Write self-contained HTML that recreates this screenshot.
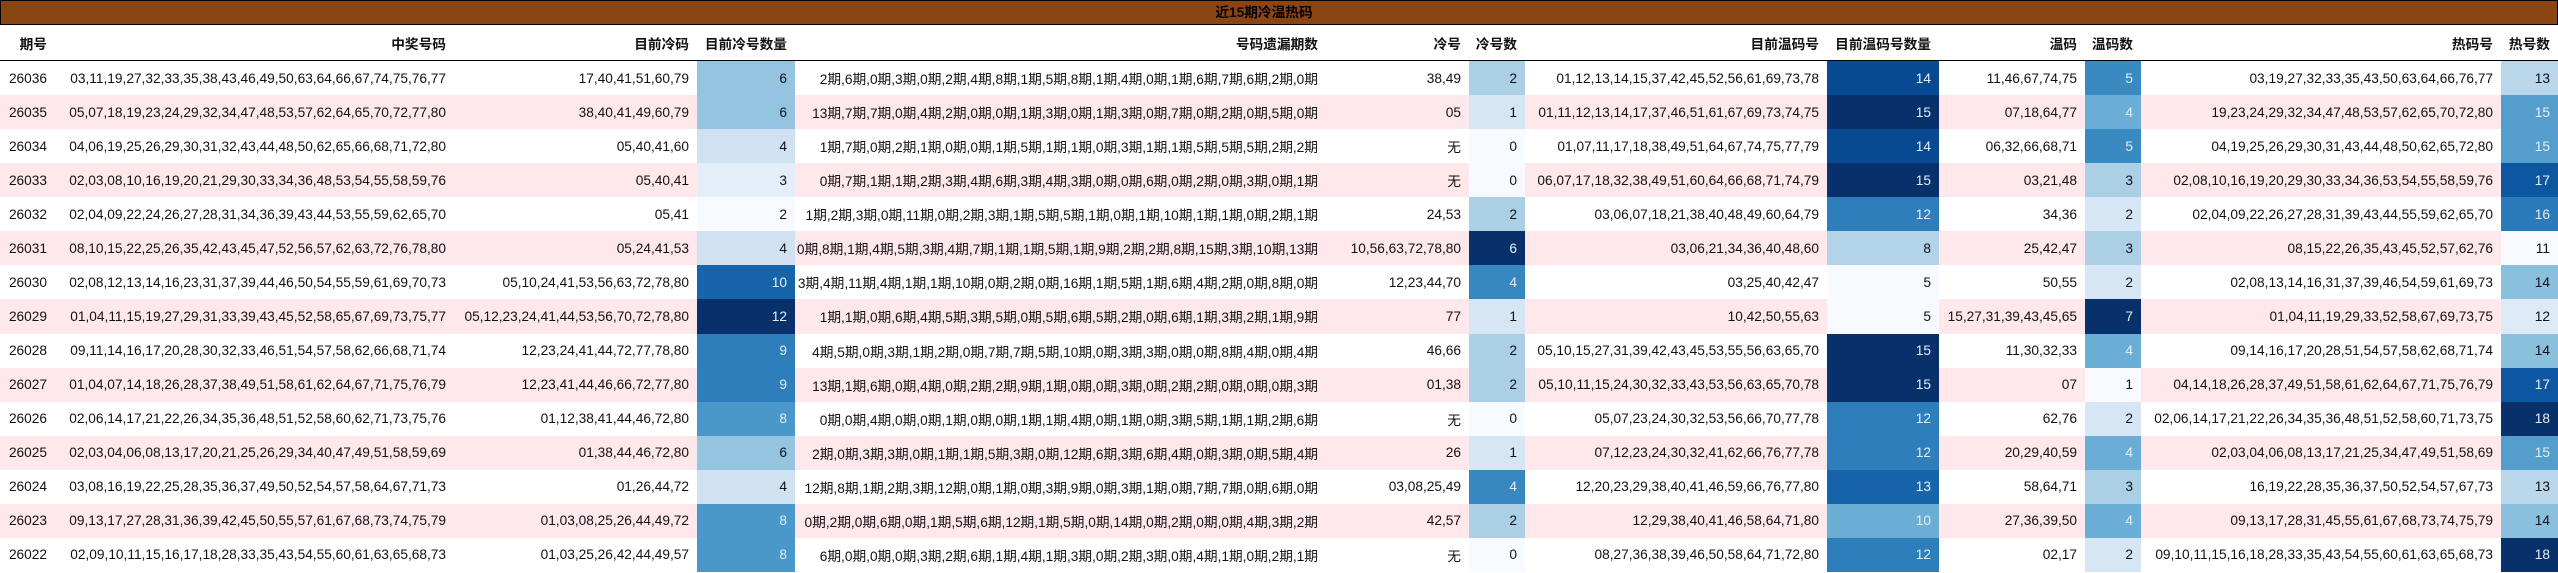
<!DOCTYPE html>
<html><head><meta charset="utf-8">
<style>
*{margin:0;padding:0;box-sizing:border-box}
html,body{width:2558px;height:573px;overflow:hidden;background:#fff}
body{font-family:"Liberation Sans","Noto Sans CJK SC",sans-serif;font-size:13.7px;color:#111}
.title{height:25px;background:#8B4513;border:1px solid #000;border-bottom:1.5px solid #000;text-align:center;font-weight:bold;line-height:23px;padding-right:30px;color:#000}
.r{display:flex;height:34.07px;align-items:stretch}
.h{height:36px;border-bottom:1.5px solid #000;font-weight:bold}
.p{background:#ffe8eb}
.r>div{white-space:nowrap;text-align:right;padding-right:8px;display:flex;align-items:center;justify-content:flex-end;overflow:visible}
.c1{width:55px}.c2{width:399px}.c3{width:243px}.c4{width:98px}.c5{width:531px}.c6{width:143px}.c7{width:56px}.c8{width:302px}.c9{width:112px}.c10{width:146px}.c11{width:56px}.c12{width:360px}.c13{width:57px}
.w{color:#e6eef8}
</style></head><body>
<div class="title">近15期冷温热码</div>
<div class="r h"><div class="c1">期号</div><div class="c2">中奖号码</div><div class="c3">目前冷码</div><div class="c4">目前冷号数量</div><div class="c5">号码遗漏期数</div><div class="c6">冷号</div><div class="c7">冷号数</div><div class="c8">目前温码号</div><div class="c9">目前温码号数量</div><div class="c10">温码</div><div class="c11">温码数</div><div class="c12">热码号</div><div class="c13">热号数</div></div>

<div class="r"><div class="c1">26036</div><div class="c2">03,11,19,27,32,33,35,38,43,46,49,50,63,64,66,67,74,75,76,77</div><div class="c3">17,40,41,51,60,79</div><div class="c4" style="background:#94c4df">6</div><div class="c5">2期,6期,0期,3期,0期,2期,4期,8期,1期,5期,8期,1期,4期,0期,1期,6期,7期,6期,2期,0期</div><div class="c6">38,49</div><div class="c7" style="background:#abd0e6">2</div><div class="c8">01,12,13,14,15,37,42,45,52,56,61,69,73,78</div><div class="c9 w" style="background:#084a91">14</div><div class="c10">11,46,67,74,75</div><div class="c11 w" style="background:#3a8ac2">5</div><div class="c12">03,19,27,32,33,35,43,50,63,64,66,76,77</div><div class="c13" style="background:#b9d6ea">13</div></div>

<div class="r p"><div class="c1">26035</div><div class="c2">05,07,18,19,23,24,29,32,34,47,48,53,57,62,64,65,70,72,77,80</div><div class="c3">38,40,41,49,60,79</div><div class="c4" style="background:#94c4df">6</div><div class="c5">13期,7期,7期,0期,4期,2期,0期,0期,1期,3期,0期,1期,3期,0期,7期,0期,2期,0期,5期,0期</div><div class="c6">05</div><div class="c7" style="background:#d6e6f4">1</div><div class="c8">01,11,12,13,14,17,37,46,51,61,67,69,73,74,75</div><div class="c9 w" style="background:#08306b">15</div><div class="c10">07,18,64,77</div><div class="c11 w" style="background:#6aaed6">4</div><div class="c12">19,23,24,29,32,34,47,48,53,57,62,65,70,72,80</div><div class="c13 w" style="background:#539ecd">15</div></div>

<div class="r"><div class="c1">26034</div><div class="c2">04,06,19,25,26,29,30,31,32,43,44,48,50,62,65,66,68,71,72,80</div><div class="c3">05,40,41,60</div><div class="c4" style="background:#d0e1f2">4</div><div class="c5">1期,7期,0期,2期,1期,0期,0期,1期,5期,1期,1期,0期,3期,1期,1期,5期,5期,5期,2期,2期</div><div class="c6">无</div><div class="c7" style="background:#f7fbff">0</div><div class="c8">01,07,11,17,18,38,49,51,64,67,74,75,77,79</div><div class="c9 w" style="background:#084a91">14</div><div class="c10">06,32,66,68,71</div><div class="c11 w" style="background:#3a8ac2">5</div><div class="c12">04,19,25,26,29,30,31,43,44,48,50,62,65,72,80</div><div class="c13 w" style="background:#539ecd">15</div></div>

<div class="r p"><div class="c1">26033</div><div class="c2">02,03,08,10,16,19,20,21,29,30,33,34,36,48,53,54,55,58,59,76</div><div class="c3">05,40,41</div><div class="c4" style="background:#e3eef9">3</div><div class="c5">0期,7期,1期,1期,2期,3期,4期,6期,3期,4期,3期,0期,0期,6期,0期,2期,0期,3期,0期,1期</div><div class="c6">无</div><div class="c7" style="background:#f7fbff">0</div><div class="c8">06,07,17,18,32,38,49,51,60,64,66,68,71,74,79</div><div class="c9 w" style="background:#08306b">15</div><div class="c10">03,21,48</div><div class="c11" style="background:#abd0e6">3</div><div class="c12">02,08,10,16,19,20,29,30,33,34,36,53,54,55,58,59,76</div><div class="c13 w" style="background:#0d57a1">17</div></div>

<div class="r"><div class="c1">26032</div><div class="c2">02,04,09,22,24,26,27,28,31,34,36,39,43,44,53,55,59,62,65,70</div><div class="c3">05,41</div><div class="c4" style="background:#f7fbff">2</div><div class="c5">1期,2期,3期,0期,11期,0期,2期,3期,1期,5期,5期,1期,0期,1期,10期,1期,1期,0期,2期,1期</div><div class="c6">24,53</div><div class="c7" style="background:#abd0e6">2</div><div class="c8">03,06,07,18,21,38,40,48,49,60,64,79</div><div class="c9 w" style="background:#2e7ebc">12</div><div class="c10">34,36</div><div class="c11" style="background:#d6e6f4">2</div><div class="c12">02,04,09,22,26,27,28,31,39,43,44,55,59,62,65,70</div><div class="c13 w" style="background:#2b7bba">16</div></div>

<div class="r p"><div class="c1">26031</div><div class="c2">08,10,15,22,25,26,35,42,43,45,47,52,56,57,62,63,72,76,78,80</div><div class="c3">05,24,41,53</div><div class="c4" style="background:#d0e1f2">4</div><div class="c5">0期,8期,1期,4期,5期,3期,4期,7期,1期,1期,5期,1期,9期,2期,2期,8期,15期,3期,10期,13期</div><div class="c6">10,56,63,72,78,80</div><div class="c7 w" style="background:#08306b">6</div><div class="c8">03,06,21,34,36,40,48,60</div><div class="c9" style="background:#b3d3e8">8</div><div class="c10">25,42,47</div><div class="c11" style="background:#abd0e6">3</div><div class="c12">08,15,22,26,35,43,45,52,57,62,76</div><div class="c13" style="background:#f7fbff">11</div></div>

<div class="r"><div class="c1">26030</div><div class="c2">02,08,12,13,14,16,23,31,37,39,44,46,50,54,55,59,61,69,70,73</div><div class="c3">05,10,24,41,53,56,63,72,78,80</div><div class="c4 w" style="background:#1764ab">10</div><div class="c5">3期,4期,11期,4期,1期,1期,10期,0期,2期,0期,16期,1期,5期,1期,6期,4期,2期,0期,8期,0期</div><div class="c6">12,23,44,70</div><div class="c7 w" style="background:#3787c0">4</div><div class="c8">03,25,40,42,47</div><div class="c9" style="background:#f7fbff">5</div><div class="c10">50,55</div><div class="c11" style="background:#d6e6f4">2</div><div class="c12">02,08,13,14,16,31,37,39,46,54,59,61,69,73</div><div class="c13" style="background:#8abfdd">14</div></div>

<div class="r p"><div class="c1">26029</div><div class="c2">01,04,11,15,19,27,29,31,33,39,43,45,52,58,65,67,69,73,75,77</div><div class="c3">05,12,23,24,41,44,53,56,70,72,78,80</div><div class="c4 w" style="background:#08306b">12</div><div class="c5">1期,1期,0期,6期,4期,5期,3期,5期,0期,5期,6期,5期,2期,0期,6期,1期,3期,2期,1期,9期</div><div class="c6">77</div><div class="c7" style="background:#d6e6f4">1</div><div class="c8">10,42,50,55,63</div><div class="c9" style="background:#f7fbff">5</div><div class="c10">15,27,31,39,43,45,65</div><div class="c11 w" style="background:#08306b">7</div><div class="c12">01,04,11,19,29,33,52,58,67,69,73,75</div><div class="c13" style="background:#dce9f6">12</div></div>

<div class="r"><div class="c1">26028</div><div class="c2">09,11,14,16,17,20,28,30,32,33,46,51,54,57,58,62,66,68,71,74</div><div class="c3">12,23,24,41,44,72,77,78,80</div><div class="c4 w" style="background:#2e7ebc">9</div><div class="c5">4期,5期,0期,3期,1期,2期,0期,7期,7期,5期,10期,0期,3期,3期,0期,0期,8期,4期,0期,4期</div><div class="c6">46,66</div><div class="c7" style="background:#abd0e6">2</div><div class="c8">05,10,15,27,31,39,42,43,45,53,55,56,63,65,70</div><div class="c9 w" style="background:#08306b">15</div><div class="c10">11,30,32,33</div><div class="c11 w" style="background:#6aaed6">4</div><div class="c12">09,14,16,17,20,28,51,54,57,58,62,68,71,74</div><div class="c13" style="background:#8abfdd">14</div></div>

<div class="r p"><div class="c1">26027</div><div class="c2">01,04,07,14,18,26,28,37,38,49,51,58,61,62,64,67,71,75,76,79</div><div class="c3">12,23,41,44,46,66,72,77,80</div><div class="c4 w" style="background:#2e7ebc">9</div><div class="c5">13期,1期,6期,0期,4期,0期,2期,2期,9期,1期,0期,0期,3期,0期,2期,2期,0期,0期,0期,3期</div><div class="c6">01,38</div><div class="c7" style="background:#abd0e6">2</div><div class="c8">05,10,11,15,24,30,32,33,43,53,56,63,65,70,78</div><div class="c9 w" style="background:#08306b">15</div><div class="c10">07</div><div class="c11" style="background:#f7fbff">1</div><div class="c12">04,14,18,26,28,37,49,51,58,61,62,64,67,71,75,76,79</div><div class="c13 w" style="background:#0d57a1">17</div></div>

<div class="r"><div class="c1">26026</div><div class="c2">02,06,14,17,21,22,26,34,35,36,48,51,52,58,60,62,71,73,75,76</div><div class="c3">01,12,38,41,44,46,72,80</div><div class="c4 w" style="background:#4a98c9">8</div><div class="c5">0期,0期,4期,0期,0期,1期,0期,0期,1期,1期,4期,0期,1期,0期,3期,5期,1期,1期,2期,6期</div><div class="c6">无</div><div class="c7" style="background:#f7fbff">0</div><div class="c8">05,07,23,24,30,32,53,56,66,70,77,78</div><div class="c9 w" style="background:#2e7ebc">12</div><div class="c10">62,76</div><div class="c11" style="background:#d6e6f4">2</div><div class="c12">02,06,14,17,21,22,26,34,35,36,48,51,52,58,60,71,73,75</div><div class="c13 w" style="background:#08306b">18</div></div>

<div class="r p"><div class="c1">26025</div><div class="c2">02,03,04,06,08,13,17,20,21,25,26,29,34,40,47,49,51,58,59,69</div><div class="c3">01,38,44,46,72,80</div><div class="c4" style="background:#94c4df">6</div><div class="c5">2期,0期,3期,3期,0期,1期,1期,5期,3期,0期,12期,6期,3期,6期,4期,0期,3期,0期,5期,4期</div><div class="c6">26</div><div class="c7" style="background:#d6e6f4">1</div><div class="c8">07,12,23,24,30,32,41,62,66,76,77,78</div><div class="c9 w" style="background:#2e7ebc">12</div><div class="c10">20,29,40,59</div><div class="c11 w" style="background:#6aaed6">4</div><div class="c12">02,03,04,06,08,13,17,21,25,34,47,49,51,58,69</div><div class="c13 w" style="background:#539ecd">15</div></div>

<div class="r"><div class="c1">26024</div><div class="c2">03,08,16,19,22,25,28,35,36,37,49,50,52,54,57,58,64,67,71,73</div><div class="c3">01,26,44,72</div><div class="c4" style="background:#d0e1f2">4</div><div class="c5">12期,8期,1期,2期,3期,12期,0期,1期,0期,3期,9期,0期,3期,1期,0期,7期,7期,0期,6期,0期</div><div class="c6">03,08,25,49</div><div class="c7 w" style="background:#3787c0">4</div><div class="c8">12,20,23,29,38,40,41,46,59,66,76,77,80</div><div class="c9 w" style="background:#1764ab">13</div><div class="c10">58,64,71</div><div class="c11" style="background:#abd0e6">3</div><div class="c12">16,19,22,28,35,36,37,50,52,54,57,67,73</div><div class="c13" style="background:#b9d6ea">13</div></div>

<div class="r p"><div class="c1">26023</div><div class="c2">09,13,17,27,28,31,36,39,42,45,50,55,57,61,67,68,73,74,75,79</div><div class="c3">01,03,08,25,26,44,49,72</div><div class="c4 w" style="background:#4a98c9">8</div><div class="c5">0期,2期,0期,6期,0期,1期,5期,6期,12期,1期,5期,0期,14期,0期,2期,0期,0期,4期,3期,2期</div><div class="c6">42,57</div><div class="c7" style="background:#abd0e6">2</div><div class="c8">12,29,38,40,41,46,58,64,71,80</div><div class="c9 w" style="background:#6aaed6">10</div><div class="c10">27,36,39,50</div><div class="c11 w" style="background:#6aaed6">4</div><div class="c12">09,13,17,28,31,45,55,61,67,68,73,74,75,79</div><div class="c13" style="background:#8abfdd">14</div></div>

<div class="r"><div class="c1">26022</div><div class="c2">02,09,10,11,15,16,17,18,28,33,35,43,54,55,60,61,63,65,68,73</div><div class="c3">01,03,25,26,42,44,49,57</div><div class="c4 w" style="background:#4a98c9">8</div><div class="c5">6期,0期,0期,0期,3期,2期,6期,1期,4期,1期,3期,0期,2期,3期,0期,4期,1期,0期,2期,1期</div><div class="c6">无</div><div class="c7" style="background:#f7fbff">0</div><div class="c8">08,27,36,38,39,46,50,58,64,71,72,80</div><div class="c9 w" style="background:#2e7ebc">12</div><div class="c10">02,17</div><div class="c11" style="background:#d6e6f4">2</div><div class="c12">09,10,11,15,16,18,28,33,35,43,54,55,60,61,63,65,68,73</div><div class="c13 w" style="background:#08306b">18</div></div>
</body></html>
